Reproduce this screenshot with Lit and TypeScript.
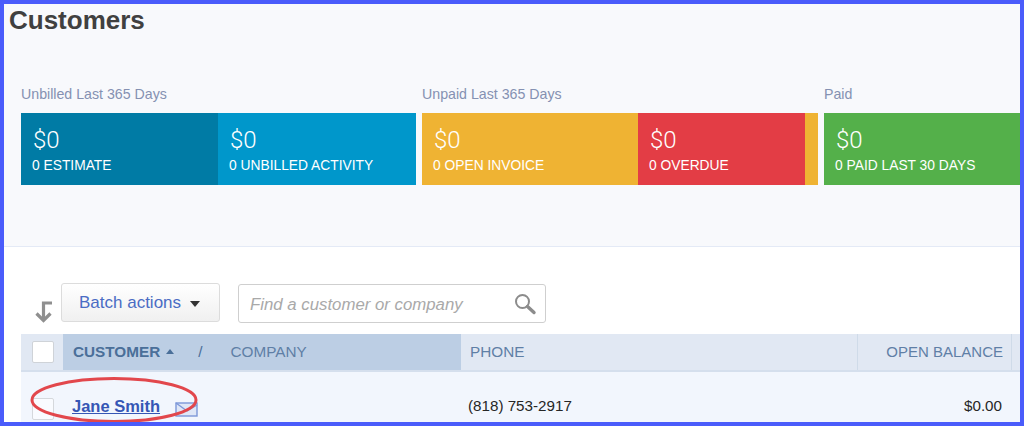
import { LitElement, html, css } from "lit";
import { customElement } from "lit/decorators.js";

@customElement("app-root")
export class AppRoot extends LitElement {
  static styles = css`
    :host { display: block; width: 1024px; height: 426px; overflow: hidden; position: relative; box-sizing: border-box; border: 4px solid #4a5cfb; background: #fff; font-family: "Liberation Sans", Arial, sans-serif; }
    .top { height: 243px; box-sizing: border-box; background: #f8f9fc; border-bottom: 1px solid #e4eaf6; padding: 2px 0 0 5px; }
    h1 { margin: 0; font-size: 26px; line-height: 28px; font-weight: 700; color: #404040; }
    .groups { display: flex; gap: 6px; margin: 50px 0 0 12px; width: 1060px; }
    .group { flex: none; }
    .g1 { width: 395px; } .g2 { width: 396px; } .g3 { width: 300px; }
    .glabel { font-size: 14.2px; line-height: 20px; color: #8591b2; margin-bottom: 9px; height: 20px; white-space: nowrap; }
    .bar { display: flex; height: 72px; }
    .tile { box-sizing: border-box; color: #fff; padding: 13px 0 0 12px; height: 72px; }
    .amt { font-family: Roboto, sans-serif; font-weight: 300; font-size: 24px; line-height: 28px; }
    .cap { font-size: 13.8px; line-height: 16px; margin: 4px 0 0 -1px; white-space: nowrap; }
    .est { width: 197px; background: #007ba5; }
    .unb { width: 198px; background: #0097cb; }
    .inv { width: 216px; background: #efb333; }
    .ovd { width: 167px; background: #e33d45; }
    .rest { width: 13px; background: #efb333; }
    .paid { width: 300px; background: #54b04a; }
    .list { padding: 36px 0 0 17px; }
    .tools { display: flex; align-items: flex-start; height: 51px; }
    .sort { width: 40px; padding: 18px 0 0 13px; box-sizing: border-box; display: block; flex: none; }
    .sort svg { display: block; }
    .batch { width: 159px; height: 39px; box-sizing: border-box; border: 1px solid #dcdcdc; border-radius: 3px; background: linear-gradient(#ffffff, #f0f0f0); display: flex; align-items: center; gap: 9px; padding-left: 17px; color: #4a6cc4; font-size: 17px; }
    .tri { width: 0; height: 0; border-left: 5.5px solid transparent; border-right: 5.5px solid transparent; border-top: 6px solid #333; margin-top: 2px; }
    .search { margin: 1px 0 0 18px; width: 308px; height: 39px; box-sizing: border-box; border: 1px solid #cfcfcf; border-radius: 3px; background: #fff; display: flex; align-items: center; justify-content: space-between; padding: 0 8px 0 11px; color: #a9a9a9; font-size: 16.8px; font-style: italic; white-space: nowrap; }
    .search span { padding-top: 2px; }
    .head { display: flex; height: 38px; box-sizing: border-box; border-bottom: 2px solid #d5dfed; background: #e1e8f3; font-size: 15.3px; color: #5f7fa6; width: 1010px; }
    .head > div { display: flex; align-items: center; box-sizing: border-box; white-space: nowrap; padding-bottom: 1px; }
    .hc { width: 42px; padding-left: 11px; }
    .box { width: 22px; height: 22px; box-sizing: border-box; background: #fff; border: 1px solid #cfd3d8; border-radius: 2px; }
    .hcust { width: 398px; background: #bccee4; padding-left: 10px; }
    .hcust b { color: #4a6f99; font-size: 15.3px; }
    .up { width: 0; height: 0; border-left: 4.5px solid transparent; border-right: 4.5px solid transparent; border-bottom: 5px solid #4a6f99; margin: 0 0 1px 6px; }
    .sl { margin: 0 28px 0 24px; color: #4a6f99; }
    .hphone { width: 397px; padding-left: 9px; border-right: 1px solid #cfdbe9; }
    .hbal { width: 154px; justify-content: flex-end; padding-right: 8px; border-right: 1px solid #cfdbe9; font-size: 15px; }
    .row { display: flex; height: 50px; background: #f2f6fd; width: 999px; font-size: 15.2px; color: #262626; }
    .row > div { box-sizing: border-box; }
    .rc { width: 42px; padding: 26px 0 0 11px; }
    .rc .box { border-color: #d5d8dc; background: #f9fbff; }
    .rcust { width: 398px; padding: 25px 0 0 9px; display: flex; align-items: flex-start; }
    .name { color: #3656b5; font-weight: 700; font-size: 16.5px; text-decoration: underline; line-height: 18px; }
    .mail { margin: 5px 0 0 15px; display: block; }
    .rphone { width: 397px; padding: 25px 0 0 7px; line-height: 18px; }
    .rbal { width: 154px; padding: 25px 10px 0 0; text-align: right; line-height: 18px; }
    .ring { position: absolute; left: 26px; top: 372px; pointer-events: none; }
  `;

  private tile(cls: string, caption: string) {
    return html`<div class="tile ${cls}"><div class="amt">$0</div><div class="cap">${caption}</div></div>`;
  }

  render() {
    return html`
      <div class="top">
        <h1>Customers</h1>
        <div class="groups">
          <div class="group g1">
            <div class="glabel">Unbilled Last 365 Days</div>
            <div class="bar">${this.tile("est", "0 ESTIMATE")}${this.tile("unb", "0 UNBILLED ACTIVITY")}</div>
          </div>
          <div class="group g2">
            <div class="glabel">Unpaid Last 365 Days</div>
            <div class="bar">${this.tile("inv", "0 OPEN INVOICE")}${this.tile("ovd", "0 OVERDUE")}<div class="rest"></div></div>
          </div>
          <div class="group g3">
            <div class="glabel">Paid</div>
            <div class="bar">${this.tile("paid", "0 PAID LAST 30 DAYS")}</div>
          </div>
        </div>
      </div>
      <div class="list">
        <div class="tools">
          <div class="sort">
            <svg width="20" height="22" viewBox="0 0 20 22" fill="none" stroke="#8f8f8f" stroke-width="3.2">
              <path d="M18 2H9.5V19" /><path d="M2.5 12.5L9.5 19.5L16.5 12.5" />
            </svg>
          </div>
          <div class="batch">Batch actions<span class="tri"></span></div>
          <div class="search">
            <span>Find a customer or company</span>
            <svg width="24" height="24" viewBox="0 0 24 24" fill="none">
              <circle cx="9.5" cy="9.5" r="6.5" stroke="#8c8c8c" stroke-width="2" />
              <path d="M14.5 14.5L21 20.5" stroke="#8c8c8c" stroke-width="3.4" stroke-linecap="round" />
            </svg>
          </div>
        </div>
        <div class="head">
          <div class="hc"><div class="box"></div></div>
          <div class="hcust"><b>CUSTOMER</b><span class="up"></span><span class="sl">/</span>COMPANY</div>
          <div class="hphone">PHONE</div>
          <div class="hbal">OPEN BALANCE</div>
        </div>
        <div class="row">
          <div class="rc"><div class="box"></div></div>
          <div class="rcust">
            <span class="name">Jane Smith</span>
            <svg class="mail" width="23" height="15" viewBox="0 0 23 15" fill="#dfe7f7" stroke="#7d97d8" stroke-width="1.4">
              <rect x="1" y="1" width="21" height="13" /><path d="M1 1L12 9L22 3" fill="none" />
            </svg>
          </div>
          <div class="rphone">(818) 753-2917</div>
          <div class="rbal">$0.00</div>
        </div>
      </div>
      <svg class="ring" width="170" height="50" viewBox="0 0 170 50" fill="none">
        <ellipse cx="84" cy="24" rx="82" ry="21.5" stroke="#e2474c" stroke-width="3" />
      </svg>
    `;
  }
}
